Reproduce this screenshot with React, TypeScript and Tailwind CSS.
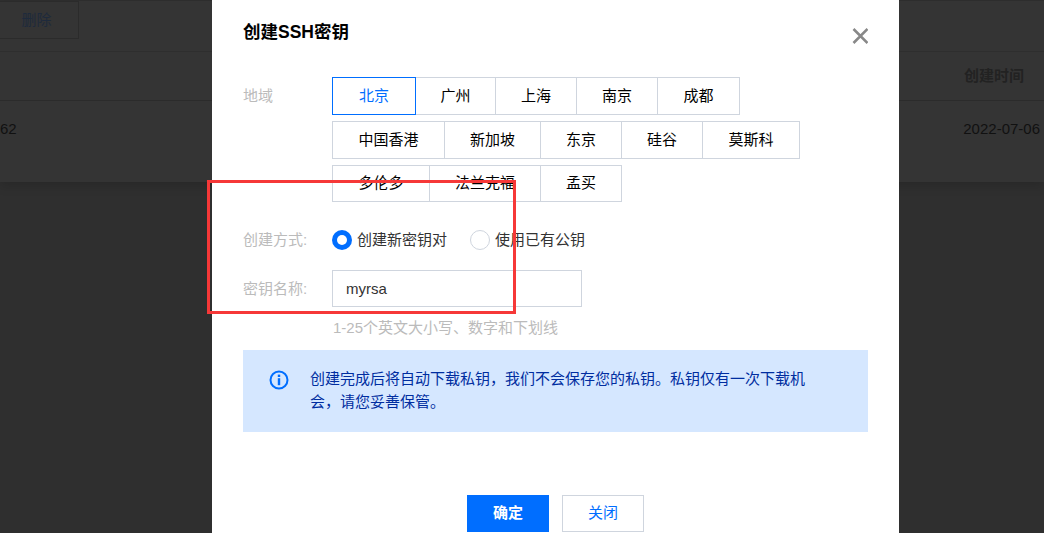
const font = '[font-family:"Liberation_Sans","Noto_Sans_CJK_SC",sans-serif]';

const rows = [
  {
    h: 'h-[38px]',
    items: [
      { t: '北京', w: 'w-[84px]', active: true },
      { t: '广州', w: 'w-[81px]' },
      { t: '上海', w: 'w-[82px]' },
      { t: '南京', w: 'w-[82px]' },
      { t: '成都', w: 'w-[83px]' },
    ],
  },
  {
    h: 'h-[38px]',
    items: [
      { t: '中国香港', w: 'w-[113px]' },
      { t: '新加坡', w: 'w-[97px]' },
      { t: '东京', w: 'w-[82px]' },
      { t: '硅谷', w: 'w-[82px]' },
      { t: '莫斯科', w: 'w-[98px]' },
    ],
  },
  {
    h: 'h-[37px]',
    items: [
      { t: '多伦多', w: 'w-[98px]' },
      { t: '法兰克福', w: 'w-[112px]' },
      { t: '孟买', w: 'w-[82px]' },
    ],
  },
];

export default function App() {
  return (
    <div className={`relative h-[533px] w-[1044px] overflow-hidden bg-[#2f2f2f] ${font}`}>
      {/* underlying page, dimmed */}
      <div className="bg-[#343434] shadow-[0_4px_10px_rgba(0,0,0,0.15)]">
        <div className="h-[51px] border-b border-[#2e2e2e]">
          <div className="ml-[-20px] mt-px flex h-[38px] w-[99px] items-center justify-center border border-[#2b2b2b] pl-[14px] text-[15px] text-[#1e2a3c]">
            删除
          </div>
        </div>
        <div className="flex h-[49px] items-center justify-end border-b border-[#2b2b2b] pr-[20px] text-[15px] font-bold text-[#222222]">
          创建时间
        </div>
        <div className="flex h-[81px] items-start justify-between pr-[4px] pt-[17px] text-[15px] text-[#111111]">
          <span>62</span>
          <span>2022-07-06</span>
        </div>
      </div>

      {/* dialog */}
      <div className="absolute left-[212px] top-0 h-[533px] w-[687px] bg-white px-[31px]">
        <div className="flex h-[77px] items-start justify-between pt-[19px]">
          <h2 className="text-[17.5px] font-bold leading-[26px] text-black">创建SSH密钥</h2>
          <svg width="16" height="16" viewBox="0 0 16 16" className="mt-[9px] text-[#888888]" aria-hidden="true">
            <path d="M1.5 1 L15.5 15 M15.5 1 L1.5 15" stroke="currentColor" strokeWidth="2.6" fill="none" />
          </svg>
        </div>

        <div className="flex">
          <div className="w-[89px] pt-[7px] text-[15px] leading-[24px] text-[#bbbbbb]">地域</div>
          <div className="flex flex-col gap-[6px]">
            {rows.map((row, i) => (
              <div key={i} className="flex">
                {row.items.map((b, j) => (
                  <div
                    key={b.t}
                    className={`relative flex items-center justify-center border text-[15px] ${row.h} ${b.w} ${
                      j > 0 ? '-ml-px' : ''
                    } ${b.active ? 'z-10 border-[#006eff] text-[#006eff]' : 'border-[#cfd5de] text-black'}`}
                  >
                    {b.t}
                  </div>
                ))}
              </div>
            ))}
          </div>
        </div>

        <div className="mt-[27px] flex h-[22px] items-center">
          <div className="w-[89px] text-[15px] text-[#bbbbbb]">创建方式:</div>
          <span className="flex h-[20px] w-[20px] items-center justify-center rounded-full bg-[#006eff]">
            <span className="h-[10px] w-[10px] rounded-full bg-white" />
          </span>
          <span className="ml-[5px] text-[15px] text-[#333333]">创建新密钥对</span>
          <span className="ml-[23px] h-[20px] w-[20px] rounded-full border border-[#cfd5de]" />
          <span className="ml-[5px] text-[15px] text-[#333333]">使用已有公钥</span>
        </div>

        <div className="mt-[19px] flex">
          <div className="flex h-[38px] w-[89px] items-center text-[15px] text-[#bbbbbb]">密钥名称:</div>
          <div>
            <div className="flex h-[37px] w-[250px] items-center border border-[#cfd5de] px-[13px] pt-px text-[15px] text-[#333333]">
              myrsa
            </div>
            <div className="ml-px mt-[11px] text-[15px] leading-[20px] text-[#bbbbbb]">1-25个英文大小写、数字和下划线</div>
          </div>
        </div>

        <div className="mt-[12px] flex h-[82px] bg-[#d5e7ff] pl-[26px] pr-[60px] pt-[17px] text-[15px] leading-[23px] text-[#002da0]">
          <svg width="20" height="20" viewBox="0 0 20 20" className="mt-[3px] shrink-0 text-[#006eff]" aria-hidden="true">
            <circle cx="10" cy="10" r="8.5" stroke="currentColor" strokeWidth="2" fill="none" />
            <rect x="8.8" y="4.6" width="2.4" height="2.4" fill="currentColor" />
            <rect x="8.8" y="8.2" width="2.4" height="7" fill="currentColor" />
          </svg>
          <p className="ml-[21px]">创建完成后将自动下载私钥，我们不会保存您的私钥。私钥仅有一次下载机会，请您妥善保管。</p>
        </div>

        <div className="mt-[63px] flex justify-center gap-[13px]">
          <div className="flex h-[37px] w-[82px] items-center justify-center bg-[#006eff] text-[15px] font-bold text-white">确定</div>
          <div className="flex h-[37px] w-[82px] items-center justify-center border border-[#cfd5de] text-[15px] text-[#006eff]">关闭</div>
        </div>
      </div>

      {/* annotation rectangle */}
      <div className="absolute left-[207px] top-[180px] h-[134px] w-[309px] border-[3px] border-[#f63838]" />
    </div>
  );
}
